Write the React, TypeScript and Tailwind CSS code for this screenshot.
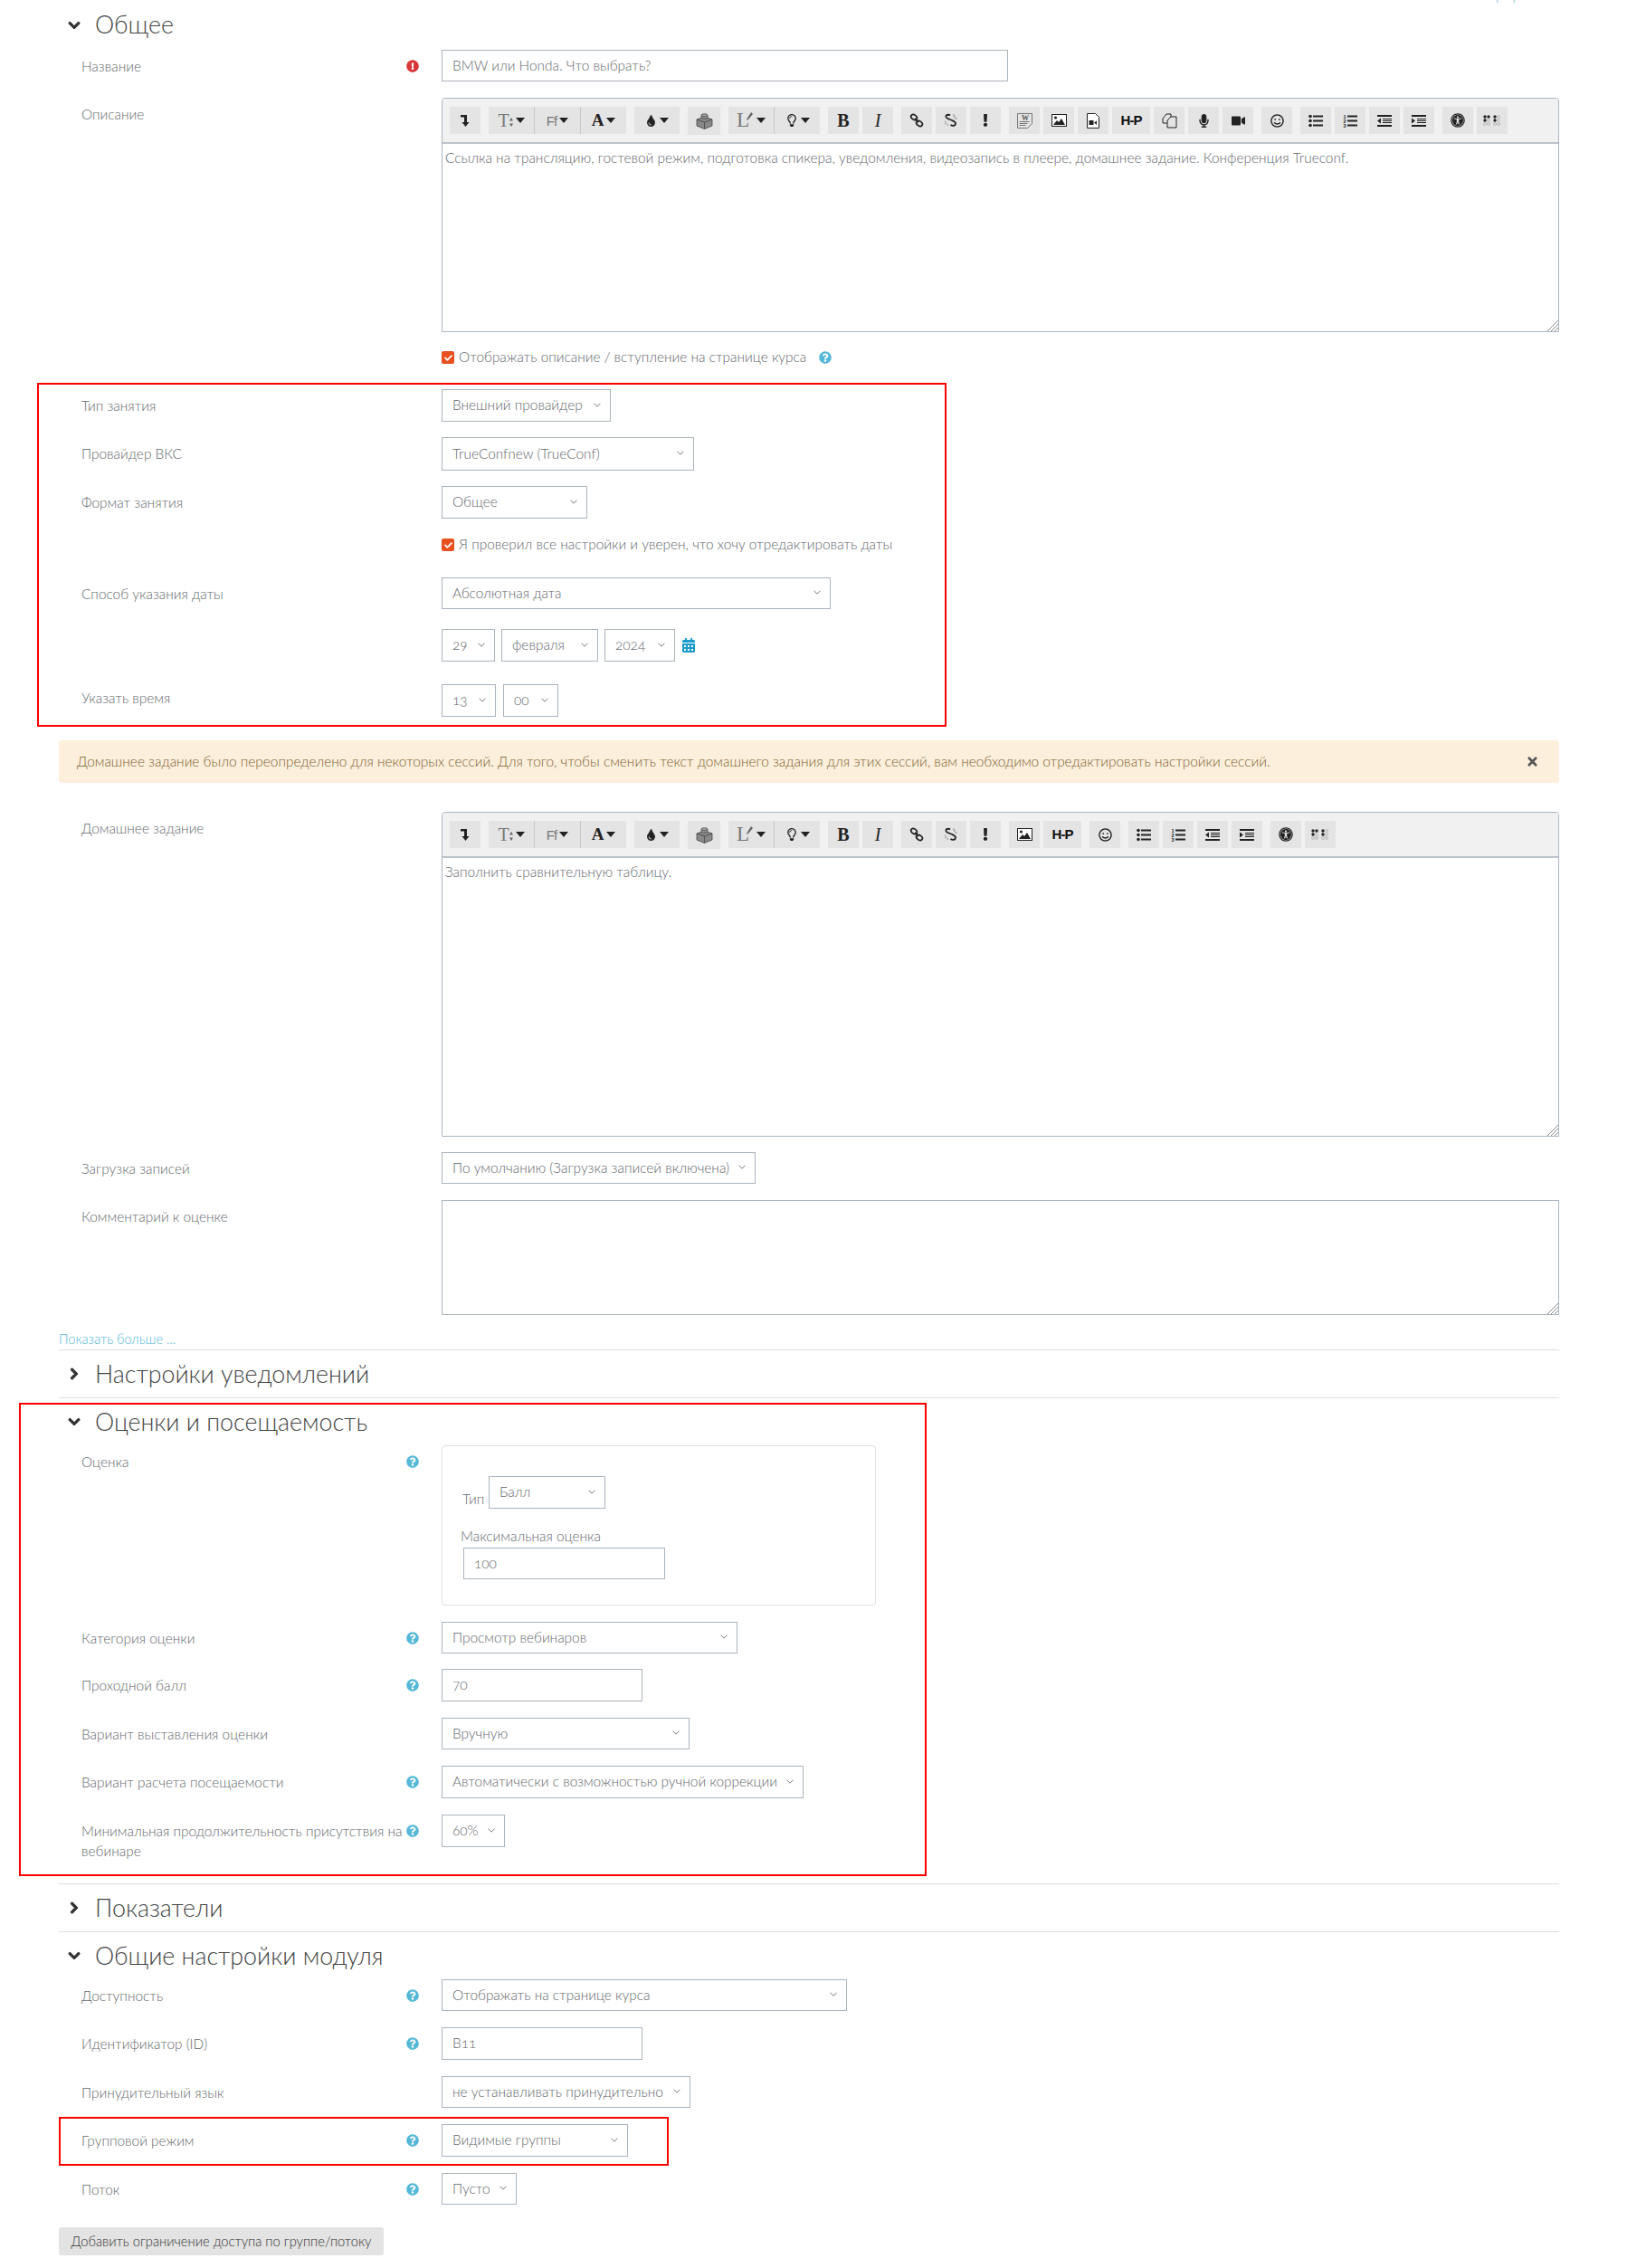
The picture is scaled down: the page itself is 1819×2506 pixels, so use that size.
import React from "react";
import {
  FaChevronDown,
  FaChevronRight,
  FaCheck,
  FaExclamationCircle,
  FaQuestionCircle,
  FaCalendarAlt,
  FaTimes,
  FaTint,
  FaExclamation,
  FaMicrophone,
  FaVideo,
  FaRegSmile,
  FaUniversalAccess,
  FaRegLightbulb,
} from "react-icons/fa";

type Children = { children?: React.ReactNode };

const Caret = () => (
  <svg width="10" height="6" viewBox="0 0 10 6" className="ml-[3px] shrink-0">
    <path d="M0 0h10L5 6z" fill="#222" />
  </svg>
);

const Tb = ({ children, w = "w-[34px]", extra = "" }: Children & { w?: string; extra?: string }) => (
  <div className={`relative flex h-[30px] items-center justify-center bg-[#e4e4e4] ${w} ${extra}`}>{children}</div>
);

const Group = ({ children }: Children) => <div className="flex gap-[4px]">{children}</div>;

const Chain = ({ broken = false }: { broken?: boolean }) => (
  <svg width="16" height="16" viewBox="0 0 16 16" fill="none" stroke="#222" strokeWidth="1.8">
    {broken ? (
      <>
        <path d="M7 2.5C5 1 2 2 2.5 4.2 3 6 6 6.5 8 7.5" />
        <path d="M8 7.5c2 1 5 1.5 5 4 0 2.5-3.5 3-5.5 1.5" />
        <path d="M11 1v3M13 3l-2 2M15 6h-3" stroke="#888" strokeWidth="0.9" />
        <path d="M1 9l2 1M1 12l2-1M4 14l1-2" stroke="#888" strokeWidth="0.9" />
      </>
    ) : (
      <>
        <ellipse cx="5" cy="4.5" rx="3.6" ry="2.6" transform="rotate(35 5 4.5)" />
        <ellipse cx="11" cy="11.5" rx="3.6" ry="2.6" transform="rotate(35 11 11.5)" />
        <path d="M6 6l4 4" />
      </>
    )}
  </svg>
);

const ListIcon = ({ ordered = false }: { ordered?: boolean }) => (
  <svg width="16" height="15" viewBox="0 0 16 15" fill="#222">
    {ordered ? (
      <>
        <text x="0.5" y="4.5" fontSize="5.5" fontWeight="700" fontFamily="'Liberation Sans',sans-serif">1</text>
        <text x="0.5" y="9.5" fontSize="5.5" fontWeight="700" fontFamily="'Liberation Sans',sans-serif">2</text>
        <text x="0.5" y="14.5" fontSize="5.5" fontWeight="700" fontFamily="'Liberation Sans',sans-serif">3</text>
      </>
    ) : (
      <>
        <circle cx="2" cy="2.5" r="1.8" />
        <circle cx="2" cy="7.5" r="1.8" />
        <circle cx="2" cy="12.5" r="1.8" />
      </>
    )}
    <rect x="5" y="1.5" width="11" height="2" />
    <rect x="5" y="6.5" width="11" height="2" />
    <rect x="5" y="11.5" width="11" height="2" />
  </svg>
);

const IndentIcon = ({ out = false }: { out?: boolean }) => (
  <svg width="16" height="13" viewBox="0 0 16 13" fill="#222">
    <rect x="0" y="0" width="16" height="2" />
    <rect x="6" y="4" width="10" height="1" />
    <rect x="6" y="6" width="10" height="1" />
    <rect x="6" y="8" width="10" height="1" />
    <rect x="0" y="11" width="16" height="2" />
    <path d={out ? "M4 3.5v6L0 6.5z" : "M0 3.5v6l4-3z"} />
  </svg>
);

const Braille = () => (
  <svg width="21" height="13" viewBox="0 0 21 13">
    {[2, 6, 13, 17].map((x) =>
      [2, 6, 10].map((y) => {
        const on = y === 2 ? x !== 17 : y === 6 ? x === 2 || x === 13 : false;
        return on ? (
          <circle key={`${x}${y}`} cx={x} cy={y} r="1.7" fill="#222" />
        ) : (
          <circle key={`${x}${y}`} cx={x} cy={y} r="1.5" fill="none" stroke="#aaa" strokeWidth="0.7" />
        );
      })
    )}
  </svg>
);

const Lego = () => (
  <svg width="19" height="19" viewBox="0 0 19 19">
    <path d="M9.5 5L18 8v7l-8.5 3.5L1 15V8z" fill="#888" stroke="#444" strokeWidth="0.8" />
    <path d="M1 8l8.5 3L18 8M9.5 11v7.5" fill="none" stroke="#444" strokeWidth="0.8" />
    <path d="M6 3.2v3c0 1 7 1 7 0v-3" fill="#999" stroke="#444" strokeWidth="0.8" />
    <ellipse cx="9.5" cy="3.2" rx="3.5" ry="1.4" fill="#aaa" stroke="#444" strokeWidth="0.8" />
  </svg>
);

const WrapArrow = () => (
  <svg width="10" height="13" viewBox="0 0 10 13" fill="#222">
    <path d="M0 0h7v8h2.5L5.5 13 1.5 8H4V2.5H0z" />
  </svg>
);

const WordDoc = () => (
  <svg width="17" height="17" viewBox="0 0 17 17" fill="none" stroke="#777" strokeWidth="1">
    <path d="M.5.5h16v11l-5 5h-11z" />
    <path d="M2.5 9.5h11M2.5 11.5h9M2.5 13.5h7" />
    <text x="5" y="7.5" fontSize="8" fontFamily="'Liberation Serif',serif" fill="#555" stroke="none" fontWeight="700">
      W
    </text>
  </svg>
);

const ImageIcon = () => (
  <svg width="17" height="14" viewBox="0 0 17 14">
    <rect x="0.5" y="0.5" width="16" height="13" fill="#fff" stroke="#222" />
    <path d="M2 12l4-5 2 2 3-4 4 7z" fill="#222" />
    <circle cx="4.5" cy="4" r="1.6" fill="#222" />
  </svg>
);

const DocVideo = () => (
  <svg width="14" height="17" viewBox="0 0 14 17">
    <path d="M.5.5h9l4 4v12h-13z" fill="#fff" stroke="#222" />
    <rect x="2.5" y="8" width="5" height="5" fill="#222" />
    <path d="M8 10.5l3-2v4.5z" fill="#222" />
  </svg>
);

const CopyIcon = () => (
  <svg width="17" height="17" viewBox="0 0 17 17" fill="none" stroke="#222">
    <path d="M1 6l4-5h5v3M6 11H1V6" />
    <path d="M6 8l4-4h6v12H6z" />
  </svg>
);

const TinyArrows = () => (
  <svg width="4" height="10" viewBox="0 0 4 10" fill="#666" className="mt-[4px]">
    <path d="M2 0l2 3.5H0zM2 10L0 6.5h4z" />
  </svg>
);

const Pen = () => (
  <svg width="8" height="11" viewBox="0 0 8 11" className="absolute left-[19px] top-[6px]">
    <path d="M6 0l2 2-5 6-2 1 .6-2z" fill="#666" />
  </svg>
);

// shared head of both editors, the tail differs
const ToolbarHead = () => (
  <>
    <Tb>
      <WrapArrow />
    </Tb>
    <div className="flex">
      <Tb w="w-[50px]">
        <span className="font-['Liberation_Serif',serif] text-[20px] font-normal text-[#777]">T</span>
        <TinyArrows />
        <Caret />
      </Tb>
      <Tb w="w-[51px]" extra="border-l border-[#c8c8c8]">
        <span className="mt-[2px] font-['Liberation_Sans',sans-serif] text-[15px] font-normal tracking-[-1px] text-[#777]">Ff</span>
        <Caret />
      </Tb>
      <Tb w="w-[51px]" extra="border-l border-[#c8c8c8]">
        <span className="font-['Liberation_Serif',serif] text-[19px] font-bold text-[#222]">A</span>
        <Caret />
      </Tb>
    </div>
    <Tb w="w-[50px]">
      <FaTint size={13} color="#222" />
      <Caret />
    </Tb>
    <Tb w="w-[36px]" extra="h-[31px] self-start">
      <Lego />
    </Tb>
    <div className="flex">
      <Tb w="w-[50px]">
        <span className="font-['Liberation_Serif',serif] text-[23px] font-normal text-[#777]">L</span>
        <Pen />
        <span className="w-[5px]" />
        <Caret />
      </Tb>
      <Tb w="w-[51px]" extra="border-l border-[#c8c8c8]">
        <FaRegLightbulb size={14} color="#222" />
        <Caret />
      </Tb>
    </div>
    <Group>
      <Tb>
        <span className="font-['Liberation_Serif',serif] text-[20px] font-bold text-[#222]">B</span>
      </Tb>
      <Tb>
        <span className="font-['Liberation_Serif',serif] text-[20px] font-normal italic text-[#222]">I</span>
      </Tb>
    </Group>
    <Group>
      <Tb>
        <Chain />
      </Tb>
      <Tb>
        <Chain broken />
      </Tb>
      <Tb>
        <FaExclamation size={14} color="#222" />
      </Tb>
    </Group>
  </>
);

const HP = () => (
  <span className="font-['Liberation_Sans',sans-serif] text-[15px] font-bold tracking-[-1px] text-[#111]">H-P</span>
);

const ToolbarTail = () => (
  <>
    <Tb>
      <FaRegSmile size={15} color="#222" />
    </Tb>
    <Group>
      <Tb>
        <ListIcon />
      </Tb>
      <Tb>
        <ListIcon ordered />
      </Tb>
      <Tb>
        <IndentIcon out />
      </Tb>
      <Tb>
        <IndentIcon />
      </Tb>
    </Group>
    <Group>
      <Tb>
        <FaUniversalAccess size={16} color="#222" />
      </Tb>
      <Tb>
        <Braille />
      </Tb>
    </Group>
  </>
);

const Grip = () => (
  <svg width="12" height="12" viewBox="0 0 12 12" className="absolute bottom-0 right-0" stroke="#888" strokeWidth="1">
    <path d="M0 12L12 0M4 12l8-8M8 12l4-4" />
  </svg>
);

const Editor = ({ children, text, h }: Children & { text: string; h: string }) => (
  <div className={`relative flex-1 rounded-t-[4px] border border-[#aab4bf] bg-white ${h}`}>
    <div className="flex h-[50px] gap-[9px] rounded-t-[4px] border-b-2 border-[#bcc3cb] bg-[#f1f1f1] pl-[8px] pt-[9px]">{children}</div>
    <div className="pl-[3px] pt-[5px] text-[15.4px] leading-[20px] text-[#63686c]">{text}</div>
    <Grip />
  </div>
);

const Select = ({ w, h = "h-[36px]", text, mt = "" }: { w: string; h?: string; text: string; mt?: string }) => (
  <div className={`flex shrink-0 items-center justify-between border border-[#aab4bf] bg-white pl-[11px] pr-[10px] text-[15.4px] text-[#63686c] oldstyle-nums ${w} ${h} ${mt}`}>
    <span className="whitespace-nowrap">{text}</span>
    <svg width="8" height="5" viewBox="0 0 8 5" fill="none" stroke="#666" strokeWidth="0.9" className="mb-[2px] shrink-0">
      <path d="M.5.7l3.5 3.5L7.5.7" />
    </svg>
  </div>
);

const Input = ({ w, h = "h-[36px]", value, extra = "" }: { w: string; h?: string; value: string; extra?: string }) => (
  <div className={`flex items-center border border-[#aab4bf] bg-white pl-[11px] text-[15.4px] text-[#63686c] oldstyle-nums ${w} ${h} ${extra}`}>{value}</div>
);

const Help = () => <FaQuestionCircle size={14} color="#56b8d8" />;

const Row = ({
  label,
  icon,
  mt = "",
  children,
  labelTop = "pt-[7px]",
}: Children & { label?: string; icon?: React.ReactNode; mt?: string; labelTop?: string }) => (
  <div className={`flex items-start ${mt}`}>
    <div className="flex w-[423px] shrink-0">
      <div className={`w-[382px] pl-[25px] text-[15.4px] leading-[22px] text-[#63686c] ${labelTop}`}>{label}</div>
      <div className="flex w-[18px] justify-center pt-[11px]">{icon}</div>
    </div>
    {children}
  </div>
);

const Checkbox = ({ text, help, mt }: { text: string; help?: boolean; mt: string }) => (
  <div className={`flex h-[20px] items-center pl-[423px] text-[15.4px] text-[#63686c] ${mt}`}>
    <span className="mr-[5px] flex h-[14px] w-[14px] items-center justify-center rounded-[2px] bg-[#e8501f]">
      <FaCheck size={9} color="#fff" />
    </span>
    {text}
    {help && (
      <span className="ml-[14px] flex">
        <Help />
      </span>
    )}
  </div>
);

const Section = ({ title, open = false, border = false, first = false }: { title: string; open?: boolean; border?: boolean; first?: boolean }) => (
  <div className={`flex items-center ${first ? "h-[55px]" : border ? "h-[53px]" : "h-[52px]"} ${border ? "border-b border-[#dedede]" : ""}`}>
    <span className="mr-[6px] flex w-[34px] justify-center">
      {open ? (
        <FaChevronDown size={14} color="#333" stroke="#333" strokeWidth={40} />
      ) : (
        <FaChevronRight size={14} color="#333" stroke="#333" strokeWidth={40} />
      )}
    </span>
    <h3 className="text-[26.8px] font-light text-[#444]">{title}</h3>
  </div>
);

const Box = ({ cls }: { cls: string }) => <div className={`pointer-events-none absolute border-2 border-[#ff0000] ${cls}`} />;

export default function App() {
  return (
    <div className="relative h-[2506px] w-[1819px] overflow-hidden bg-white font-['Lato','Noto_Sans',sans-serif] font-light">
      <span className="absolute left-[1627px] top-[-16px] text-[15.4px] leading-[20px] text-[#56b8d8]">Свернуть всё</span>

      <div className="w-[1723px] pl-[65px]">
        <Section title="Общее" open first />
        <Row label="Название" icon={<FaExclamationCircle size={14} color="#d8383a" />}>
          <Input w="w-[626px]" h="h-[35px]" value="BMW или Honda. Что выбрать?" />
        </Row>
        <Row label="Описание" mt="mt-[18px]">
          <Editor h="h-[259px]" text="Ссылка на трансляцию, гостевой режим, подготовка спикера, уведомления, видеозапись в плеере, домашнее задание. Конференция Trueconf.">
            <ToolbarHead />
            <Group>
              <Tb>
                <WordDoc />
              </Tb>
              <Tb>
                <ImageIcon />
              </Tb>
              <Tb>
                <DocVideo />
              </Tb>
              <Tb w="w-[42px]">
                <HP />
              </Tb>
              <Tb>
                <CopyIcon />
              </Tb>
              <Tb>
                <FaMicrophone size={15} color="#222" />
              </Tb>
              <Tb>
                <FaVideo size={15} color="#222" />
              </Tb>
            </Group>
            <ToolbarTail />
          </Editor>
        </Row>
        <Checkbox mt="mt-[18px]" text="Отображать описание / вступление на странице курса" help />

        <Row label="Тип занятия" mt="mt-[25px]">
          <Select w="w-[187px]" text="Внешний провайдер" />
        </Row>
        <Row label="Провайдер ВКС" mt="mt-[17px]">
          <Select w="w-[279px]" h="h-[37px]" text="TrueConfnew (TrueConf)" />
        </Row>
        <Row label="Формат занятия" mt="mt-[17px]">
          <Select w="w-[161px]" text="Общее" />
        </Row>
        <Checkbox mt="mt-[19px]" text="Я проверил все настройки и уверен, что хочу отредактировать даты" />
        <Row label="Способ указания даты" mt="mt-[26px]">
          <Select w="w-[430px]" h="h-[35px]" text="Абсолютная дата" />
        </Row>
        <Row mt="mt-[22px]">
          <div className="flex items-center gap-[7px]">
            <Select w="w-[59px]" text="29" />
            <Select w="w-[107px]" text="февраля" />
            <Select w="w-[78px]" text="2024" />
            <FaCalendarAlt size={16} color="#1a9bc9" />
          </div>
        </Row>
        <Row label="Указать время" mt="mt-[25px]" labelTop="pt-[4px]">
          <div className="flex gap-[8px]">
            <Select w="w-[60px]" text="13" />
            <Select w="w-[61px]" text="00" />
          </div>
        </Row>

        <div className="mt-[26px] flex h-[47px] items-center justify-between rounded-[4px] bg-[#fcefdc] pl-[20px] pr-[22px] text-[15.4px] text-[#7d5f30]">
          <span>
            Домашнее задание было переопределено для некоторых сессий. Для того, чтобы сменить текст домашнего задания для этих сессий, вам необходимо отредактировать настройки сессий.
          </span>
          <FaTimes size={15} color="#555" />
        </div>

        <Row label="Домашнее задание" mt="mt-[32px]">
          <Editor h="h-[359px]" text="Заполнить сравнительную таблицу.">
            <ToolbarHead />
            <Group>
              <Tb>
                <ImageIcon />
              </Tb>
              <Tb w="w-[42px]">
                <HP />
              </Tb>
            </Group>
            <ToolbarTail />
          </Editor>
        </Row>
        <Row label="Загрузка записей" mt="mt-[17px]">
          <Select w="w-[347px]" h="h-[35px]" text="По умолчанию (Загрузка записей включена)" />
        </Row>
        <Row label="Комментарий к оценке" mt="mt-[18px]">
          <div className="relative h-[127px] flex-1 border border-[#aab4bf] bg-white">
            <Grip />
          </div>
        </Row>

        <div className="mt-[17px] h-[22px] border-b border-[#dedede] text-[14.6px] leading-[20px] text-[#56b8d8]">Показать больше ...</div>
        <Section title="Настройки уведомлений" border />
        <Section title="Оценки и посещаемость" open />
        <Row label="Оценка" icon={<Help />}>
          <div className="h-[177px] w-[480px] rounded-[4px] border border-[#e0e0e0] pl-[22px] pt-[33px] text-[15.4px] text-[#63686c]">
            <div className="flex items-end">
              <span className="mb-[-1px] w-[29px] leading-[24px]">Тип</span>
              <Select w="w-[129px]" text="Балл" />
            </div>
            <div className="-ml-[2px] mt-[20px] h-[20px] leading-[20px]">Максимальная оценка</div>
            <Input w="w-[223px]" h="h-[35px]" value="100" extra="mt-[3px] ml-[1px]" />
          </div>
        </Row>
        <Row label="Категория оценки" icon={<Help />} mt="mt-[18px]">
          <Select w="w-[327px]" h="h-[35px]" text="Просмотр вебинаров" />
        </Row>
        <Row label="Проходной балл" icon={<Help />} mt="mt-[17px]">
          <Input w="w-[222px]" value="70" />
        </Row>
        <Row label="Вариант выставления оценки" mt="mt-[18px]">
          <Select w="w-[274px]" h="h-[35px]" text="Вручную" />
        </Row>
        <Row label="Вариант расчета посещаемости" icon={<Help />} mt="mt-[18px]">
          <Select w="w-[400px]" text="Автоматически с возможностью ручной коррекции" />
        </Row>
        <Row label="Минимальная продолжительность присутствия на вебинаре" icon={<Help />} mt="mt-[18px]">
          <Select w="w-[70px]" text="60%" />
        </Row>
        <div className="mt-[25px] border-t border-[#dedede]">
          <Section title="Показатели" border />
        </div>
        <Section title="Общие настройки модуля" open />
        <Row label="Доступность" icon={<Help />}>
          <Select w="w-[448px]" h="h-[35px]" text="Отображать на странице курса" />
        </Row>
        <Row label="Идентификатор (ID)" icon={<Help />} mt="mt-[18px]">
          <Input w="w-[222px]" value="В11" />
        </Row>
        <Row label="Принудительный язык" mt="mt-[18px]">
          <Select w="w-[275px]" h="h-[35px]" text="не устанавливать принудительно" />
        </Row>
        <Row label="Групповой режим" icon={<Help />} mt="mt-[18px]">
          <Select w="w-[206px]" text="Видимые группы" />
        </Row>
        <Row label="Поток" icon={<Help />} mt="mt-[18px]">
          <Select w="w-[83px]" h="h-[35px]" text="Пусто" />
        </Row>
        <button className="mt-[25px] h-[31px] w-[359px] rounded-[3px] bg-[#e3e3e3] text-[14.7px] text-[#333]">Добавить ограничение доступа по группе/потоку</button>
      </div>

      <Box cls="left-[41px] top-[423px] h-[380px] w-[1005px]" />
      <Box cls="left-[21px] top-[1550px] h-[523px] w-[1003px]" />
      <Box cls="left-[65px] top-[2339px] h-[54px] w-[674px]" />
    </div>
  );
}
